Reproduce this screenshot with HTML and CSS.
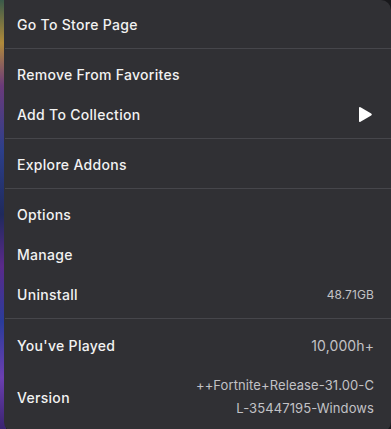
FILE: index.html
```html
<!DOCTYPE html>
<html lang="en">
<head>
  <meta charset="UTF-8" />
  <title>Game Menu</title>
  <link rel="stylesheet" href="styles.css">
</head>
<body>
  <!-- Context menu -->
  <div class="menu">
    <div class="section">
      <div class="item">Go To Store Page</div>
    </div>

    <div class="section">
      <div class="item">Remove From Favorites</div>
      <div class="item">
        <span>Add To Collection</span>
        <svg class="arrow" width="15" height="17" viewBox="0 0 15 17">
          <path d="M2.5 1.2 L13.2 7.4 Q14.6 8.5 13.2 9.6 L2.5 15.8 Q1 16.6 1 15 L1 2 Q1 0.4 2.5 1.2 Z" fill="#fff" />
        </svg>
      </div>
    </div>

    <div class="section">
      <div class="item">Explore Addons</div>
    </div>

    <div class="section">
      <div class="item">Options</div>
      <div class="item">Manage</div>
      <div class="item">
        <span>Uninstall</span>
        <span class="value small">48.71GB</span>
      </div>
    </div>

    <div class="section last">
      <div class="item">
        <span>You've Played</span>
        <span class="value">10,000h+</span>
      </div>
      <div class="item tall">
        <span>Version</span>
        <span class="value version">++Fortnite+Release-31.00-C<br>L-35447195-Windows</span>
      </div>
    </div>
  </div>
</body>
</html>
```

FILE: styles.css
```css
* {
  box-sizing: border-box;
  margin: 0;
  padding: 0;
}

body {
  font-family: 'Inter', 'Noto Sans', sans-serif;
  background: #18181b;
  height: 429px;
  overflow: hidden;
  position: relative;
}

/* bit of game art peeking out on the left */
body::before {
  content: '';
  position: absolute;
  left: 0;
  top: 0;
  width: 6px;
  height: 100%;
  background: linear-gradient(180deg, #3a5a4a 0%, #b08a3a 10%, #6a3a7a 20%, #2c3f8a 35%, #1f2a5c 50%, #5a2a8a 62%, #2a3c9a 75%, #6b3fb0 88%, #3a2470 100%);
}

.menu {
  position: relative;
  margin-left: 4px;
  width: 387px;
  height: 432px;
  background: #303034;
  border-radius: 0 10px 10px 10px;
  color: #f2f2f2;
}

.section {
  padding: 4px 0 4px;
  border-bottom: 1px solid #46464b;
  margin-left: 1px;
}

.section + .section {
  padding-top: 5px;
}

.section.last {
  border-bottom: none;
  padding-top: 6px;
}

.item {
  display: flex;
  align-items: center;
  justify-content: space-between;
  height: 40px;
  padding: 0 17px 0 12px;
  font-size: 14px;
  font-weight: 500;
  letter-spacing: 0.3px;
}

.item.tall {
  height: 64px;
}

.value {
  color: #c2c2c6;
  font-size: 14px;
  font-weight: 400;
  letter-spacing: 0.1px;
  text-align: right;
}

.value.small {
  font-size: 12px;
}

.value.version {
  font-size: 13px;
  line-height: 23px;
}

.arrow {
  display: block;
  margin-right: 1px;
}
```
